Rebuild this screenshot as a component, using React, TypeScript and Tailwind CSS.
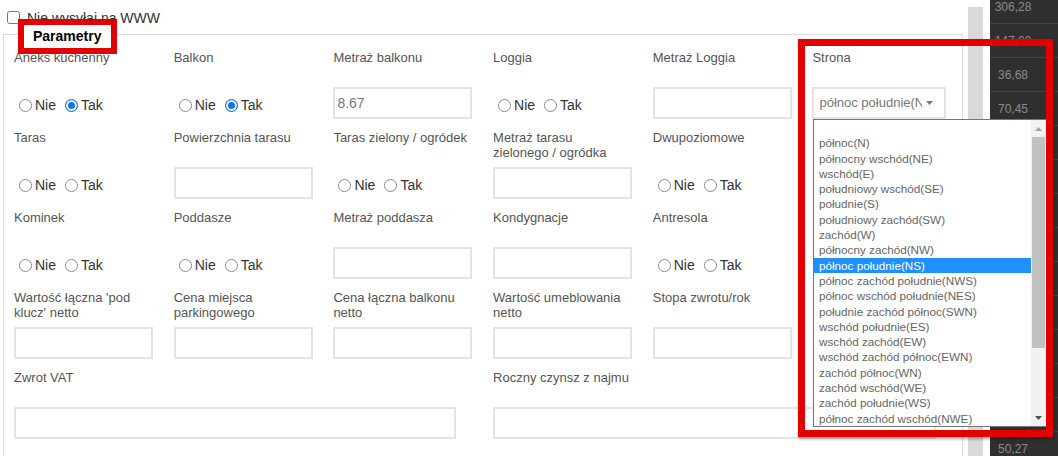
import React from 'react';

type Kind = 'radio' | 'input' | 'select' | 'empty';

interface FieldDef {
    label: string[];
    kind: Kind;
    checked?: 'nie' | 'tak';
    value?: string;
    span?: 3;
    width?: string;
}

const rows: FieldDef[][] = [
    [
        { label: ['Aneks kuchenny'], kind: 'radio', checked: 'tak' },
        { label: ['Balkon'], kind: 'radio', checked: 'tak' },
        { label: ['Metraż balkonu'], kind: 'input', value: '8.67' },
        { label: ['Loggia'], kind: 'radio' },
        { label: ['Metraż Loggia'], kind: 'input' },
        { label: ['Strona'], kind: 'select' },
    ],
    [
        { label: ['Taras'], kind: 'radio' },
        { label: ['Powierzchnia tarasu'], kind: 'input' },
        { label: ['Taras zielony / ogródek'], kind: 'radio' },
        { label: ['Metraż tarasu', 'zielonego / ogródka'], kind: 'input' },
        { label: ['Dwupoziomowe'], kind: 'radio' },
        { label: [], kind: 'empty' },
    ],
    [
        { label: ['Kominek'], kind: 'radio' },
        { label: ['Poddasze'], kind: 'radio' },
        { label: ['Metraż poddasza'], kind: 'input' },
        { label: ['Kondygnacje'], kind: 'input' },
        { label: ['Antresola'], kind: 'radio' },
        { label: [], kind: 'empty' },
    ],
    [
        { label: ["Wartość łączna 'pod", "klucz' netto"], kind: 'input' },
        { label: ['Cena miejsca', 'parkingowego'], kind: 'input' },
        { label: ['Cena łączna balkonu', 'netto'], kind: 'input' },
        { label: ['Wartość umeblowania', 'netto'], kind: 'input' },
        { label: ['Stopa zwrotu/rok'], kind: 'input' },
        { label: [], kind: 'empty' },
    ],
    [
        { label: ['Zwrot VAT'], kind: 'input', span: 3, width: 'w-[442px]' },
        { label: ['Roczny czynsz z najmu'], kind: 'input', span: 3, width: 'w-[443px]' },
    ],
];

// visible part of the open "Strona" list
const options = [
    '',
    'północ(N)',
    'północny wschód(NE)',
    'wschód(E)',
    'południowy wschód(SE)',
    'południe(S)',
    'południowy zachód(SW)',
    'zachód(W)',
    'północny zachód(NW)',
    'północ południe(NS)',
    'północ zachód południe(NWS)',
    'północ wschód południe(NES)',
    'południe zachód północ(SWN)',
    'wschód południe(ES)',
    'wschód zachód(EW)',
    'wschód zachód północ(EWN)',
    'zachód północ(WN)',
    'zachód wschód(WE)',
    'zachód południe(WS)',
    'północ zachód wschód(NWE)',
];

const numbers = ['306,28', '147,00', '36,68', '70,45', '52,10', '64,33', '48,90', '71,25', '39,80', '55,62', '44,17', '61,09', '58,40', '50,27'];

const radioCls =
    'm-0 ml-[5px] mr-[3px] h-[13px] w-[13px] appearance-none rounded-full border border-[#8a8a8a] bg-white checked:border-[#1a73e8] checked:bg-[#1a73e8] checked:shadow-[inset_0_0_0_2px_white]';

function RadioPair({ name, checked }: { name: string; checked?: 'nie' | 'tak' }) {
    return (
        <div className="flex h-full items-center pt-[4px] text-[14px] text-[#333]">
            <label className="mr-[4px] flex items-center">
                <input type="radio" name={name} defaultChecked={checked === 'nie'} className={radioCls} />
                Nie
            </label>
            <label className="flex items-center">
                <input type="radio" name={name} defaultChecked={checked === 'tak'} className={radioCls} />
                Tak
            </label>
        </div>
    );
}

function Caret({ className }: { className?: string }) {
    return (
        <svg width="7" height="4" viewBox="0 0 7 4" className={className}>
            <polygon points="0,0 7,0 3.5,4" fill="currentColor" />
        </svg>
    );
}

function Field({ def, name }: { def: FieldDef; name: string }) {
    return (
        <div className={def.span === 3 ? 'col-span-3' : ''}>
            <div className="h-[37px] text-[13px] leading-[15px] whitespace-nowrap text-[#555]">
                {def.label.map((line) => (
                    <div key={line}>{line}</div>
                ))}
            </div>
            <div className="h-[32px]">
                {def.kind === 'radio' && <RadioPair name={name} checked={def.checked} />}
                {def.kind === 'input' && (
                    <input
                        type="text"
                        defaultValue={def.value}
                        className={`${def.width ?? 'w-[139px]'} h-[32px] border-2 border-[#e4e4e4] px-[2px] text-[14px] text-[#777] outline-none`}
                    />
                )}
                {def.kind === 'select' && (
                    <div className="flex h-[32px] w-[134px] items-center border-2 border-[#e4e4e4] pl-[5px]">
                        <span className="w-[103px] overflow-hidden whitespace-nowrap text-[13px] text-[#777]">północ południe(NS)</span>
                        <Caret className="ml-[4px] text-[#777]" />
                    </div>
                )}
            </div>
        </div>
    );
}

export default function App() {
    return (
        <div className="relative flex h-[456px] w-[1058px] overflow-hidden bg-white font-['Liberation_Sans',Arial,sans-serif]">
            {/* LEFT: form */}
            <div className="w-[966px] shrink-0">
                <div className="flex h-[34px] items-start pl-[7px] pt-[11px]">
                    <input type="checkbox" className="m-0 h-[13px] w-[13px]" />
                    <span className="ml-[7px] text-[14px] leading-[14px] text-[#333]">Nie wysyłaj na WWW</span>
                </div>
                <div className="ml-[3px] h-[422px] w-[960px] border border-b-0 border-[#ddd] pl-[10px] pt-[15px]">
                    <div className="grid grid-cols-[repeat(6,159.7px)] gap-y-[11px]">
                        {rows.map((row, r) =>
                            row.map((def, c) => <Field key={`${r}-${c}`} def={def} name={`f-${r}-${c}`} />)
                        )}
                    </div>
                </div>
            </div>

            {/* scroll bar strip */}
            <div className="ml-[2px] mt-[7px] w-[15px] shrink-0 bg-[#d9d9d9]" />

            {/* dark panel */}
            <div className="ml-[7px] flex-1 bg-[#2f2f2f]">
                <div className="-mt-[10px]">
                    {numbers.map((n) => (
                        <div key={n} className="flex h-[34px] items-center border-b border-[#444]">
                            <span className="w-[46px] text-center text-[12px] text-[#8c8c8c]">{n}</span>
                        </div>
                    ))}
                </div>
            </div>

            {/* open select list */}
            <div className="absolute left-[813px] top-[119px] flex h-[308px] w-[234px] overflow-hidden border border-[#767676] bg-white">
                <div className="flex-1">
                    {options.map((o, i) => (
                        <div
                            key={i}
                            className={`h-[15.3px] pl-[5px] text-[11.7px] leading-[15.3px] whitespace-nowrap ${i === 9 ? 'bg-[#1e90ff] text-white' : 'text-[#666]'}`}
                        >
                            {o}
                        </div>
                    ))}
                </div>
                <div className="flex w-[15px] flex-col bg-[#f1f1f1]">
                    <div className="flex h-[17px] items-center justify-center">
                        <Caret className="rotate-180 text-[#a3a3a3]" />
                    </div>
                    <div className="mx-[1px] h-[211px] bg-[#c1c1c1]" />
                    <div className="flex-1" />
                    <div className="flex h-[17px] items-center justify-center">
                        <Caret className="text-[#505050]" />
                    </div>
                </div>
            </div>

            {/* annotation boxes */}
            <div className="pointer-events-none absolute left-[798px] top-[39px] h-[398px] w-[255px] border-[7px] border-[#e30000] shadow-[1px_2px_3px_rgba(0,0,0,0.35)]" />
            <div className="absolute left-[18px] top-[19px] flex h-[35px] w-[99px] items-center border-[6px] border-[#e30000] bg-white pl-[9px] text-[14px] font-bold text-black">
                Parametry
            </div>
        </div>
    );
}
